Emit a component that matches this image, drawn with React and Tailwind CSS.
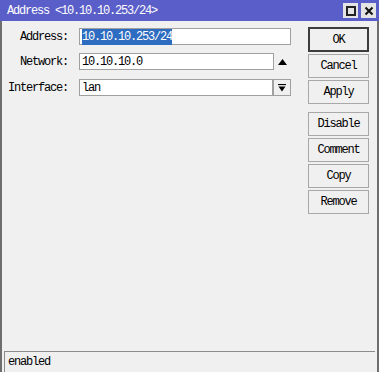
import React from 'react';

const FONT = { fontFamily: '"Liberation Mono", "DejaVu Sans Mono", monospace' };

const ActionButton = ({ label, primary = false }) => (
	<button
		type="button"
		className={
			primary
				? 'flex h-[25px] w-[61px] items-center justify-center border-2 border-[#3c3c3c] bg-[#f0f0f0] text-black'
				: 'flex h-[24px] w-[61px] items-center justify-center border border-[#a8a8a8] bg-[#f0f0f0] text-black'
		}
	>
		{label}
	</button>
);

const FieldRow = ({ label, className = '', children }) => (
	<div className={`flex h-[17px] items-center ${className}`}>
		<span className="w-[66px] text-right">{label}</span>
		<div className="ml-[11px] flex h-full items-center">{children}</div>
	</div>
);

const App = () => {
	return (
		<div className="h-[372px] w-[383px] overflow-hidden bg-white text-[12px] leading-none tracking-[-1.2px] text-black" style={FONT}>
			<div className="flex h-full w-[379px] flex-col">
				<div className="flex h-[21px] items-center justify-between bg-[#5a5ec8] pl-[7px] pr-[3px] text-white">
					<span>Address &lt;10.10.10.253/24&gt;</span>
					<div className="flex items-center gap-[3px]">
						<div className="flex h-[15px] w-[15px] items-center justify-center bg-[#e4e4e4]">
							<div className="h-[10px] w-[10px] border-2 border-[#222]" />
						</div>
						<div className="flex h-[15px] w-[15px] items-center justify-center bg-[#e4e4e4]">
							<svg width="10" height="10" viewBox="0 0 10 10">
								<path d="M1.5 1.5 L8.5 8.5 M8.5 1.5 L1.5 8.5" stroke="#111" strokeWidth="2" />
							</svg>
						</div>
					</div>
				</div>

				<div className="flex flex-1 flex-col border-x-2 border-[#6e6e6e] bg-[#f0f0f0]">
					<div className="flex flex-1">
						<div className="flex flex-col pt-[7px]">
							<FieldRow label="Address:">
								<div className="flex h-[17px] w-[212px] items-center border border-[#a0a0a0] bg-white px-[2px]">
									<span className="bg-[#2d6cc0] py-[2px] text-white">10.10.10.253/24</span>
								</div>
							</FieldRow>
							<FieldRow label="Network:" className="mt-[8px]">
								<div className="flex h-[17px] w-[195px] items-center border border-[#a0a0a0] bg-white px-[2px]">10.10.10.0</div>
								<div className="flex h-[17px] w-[17px] items-center justify-center">
									<svg width="9" height="6" viewBox="0 0 9 6">
										<path d="M4.5 0 L9 6 L0 6 Z" fill="#000" />
									</svg>
								</div>
							</FieldRow>
							<FieldRow label="Interface:" className="mt-[9px]">
								<div className="flex h-[17px] w-[194px] items-center border border-[#a0a0a0] bg-white px-[2px]">lan</div>
								<div className="flex h-[17px] w-[18px] items-center justify-center border border-[#a0a0a0] bg-[#f0f0f0]">
									<svg width="8" height="8" viewBox="0 0 8 8">
										<path d="M0 0.5 H8" stroke="#000" strokeWidth="1.2" />
										<path d="M0.5 2.5 H7.5 L4 7.5 Z" fill="#000" />
									</svg>
								</div>
							</FieldRow>
						</div>

						<div className="ml-[17px] flex flex-col pt-[6px]">
							<div className="flex flex-col gap-[2px]">
								<ActionButton label="OK" primary />
								<ActionButton label="Cancel" />
								<ActionButton label="Apply" />
							</div>
							<div className="mt-[8px] flex flex-col gap-[2px]">
								<ActionButton label="Disable" />
								<ActionButton label="Comment" />
								<ActionButton label="Copy" />
								<ActionButton label="Remove" />
							</div>
						</div>
					</div>

					<div className="mx-[2px] flex h-[21px] items-center border-l border-t border-[#8c8c8c] pl-[3px]">
						enabled
					</div>
				</div>
			</div>
		</div>
	);
};

export default App;
